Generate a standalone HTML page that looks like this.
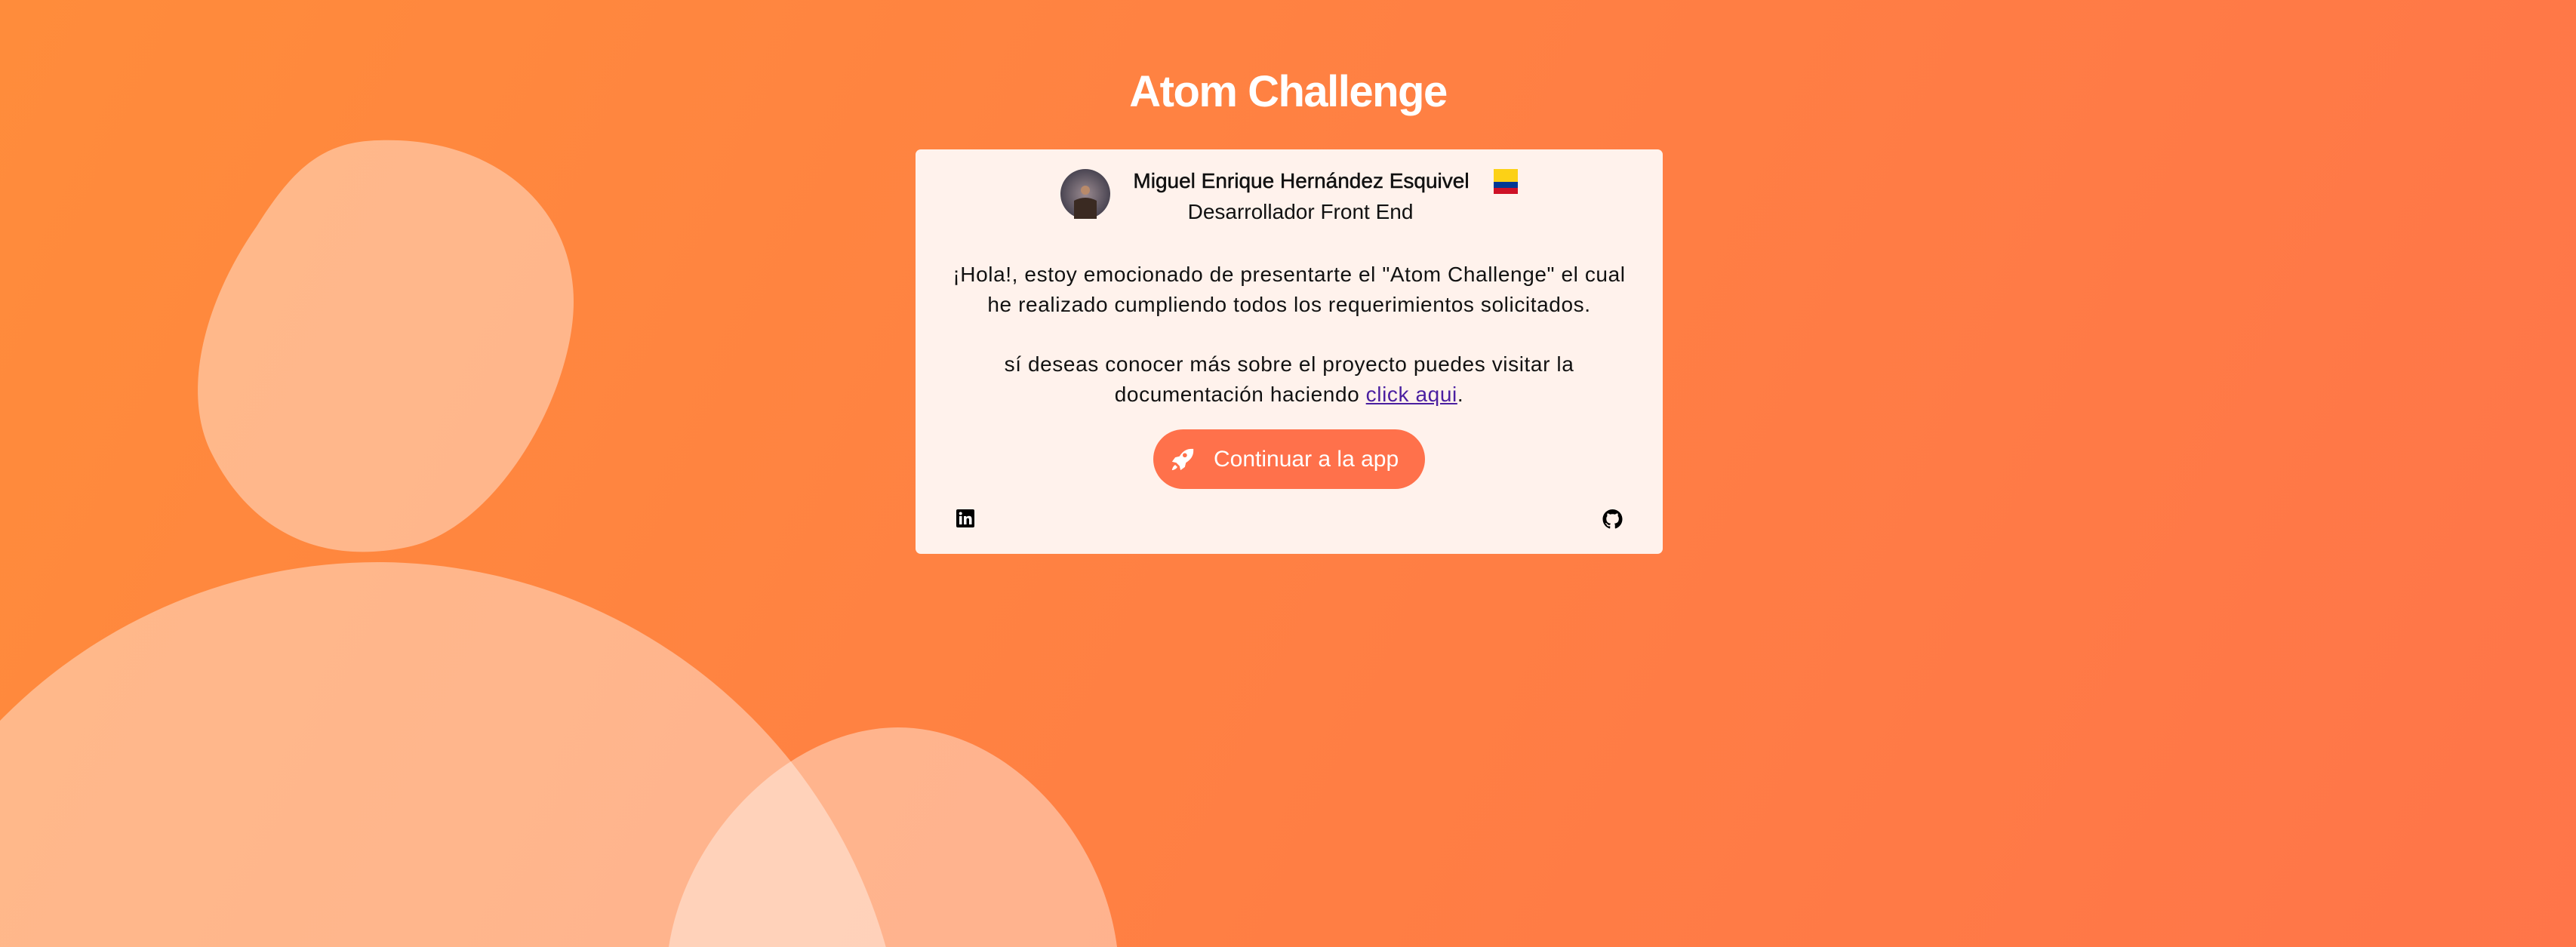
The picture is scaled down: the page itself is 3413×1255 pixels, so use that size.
<!DOCTYPE html>
<html><head><meta charset="utf-8"><style>
html,body{margin:0;padding:0;width:3413px;height:1255px;overflow:hidden}
body{background:linear-gradient(115deg,#ff8c3b 0%,#ff8242 40%,#ff7549 100%);font-family:"Liberation Sans",sans-serif;position:relative}
svg{display:block}
svg.bg{position:absolute;left:0;top:0}
h1{position:absolute;left:0;width:3413px;top:88px;margin:0;text-align:center;color:#fff;font-size:58px;font-weight:bold;letter-spacing:-1.5px}
.card{position:absolute;left:1213px;top:198px;width:990px;height:536px;background:#fff2ec;border-radius:7px;overflow:hidden}
.t{position:absolute;left:0;width:990px;text-align:center;color:#111;white-space:nowrap}
</style></head><body>
<svg class="bg" width="3413" height="1255">
<path d="M500,186 C650,180 760,270 760,400 C760,520 660,700 540,725 C420,750 330,700 280,600 C240,520 270,400 340,300 C390,220 430,188 500,186Z" fill="#fff" fill-opacity="0.4"/>
<circle cx="500" cy="1445" r="700" fill="#fff" fill-opacity="0.4"/>
<path d="M886,1255 C910,1100 1050,964 1190,964 C1330,964 1460,1100 1480,1255Z" fill="#fff" fill-opacity="0.4"/>
</svg>
<h1>Atom Challenge</h1>
<div class="card">
<svg style="position:absolute;left:192px;top:26px" width="66" height="66"><defs><radialGradient id="g"><stop offset="0" stop-color="#9a8a90"/><stop offset="1" stop-color="#4a4552"/></radialGradient></defs><circle cx="33" cy="33" r="33" fill="url(#g)"/><path d="M18 66 V42 Q33 34 48 42 V66Z" fill="#3a2a22"/><circle cx="33" cy="28" r="6" fill="#b88a6a"/></svg>
<div class="t" style="top:26px;font-size:28px;left:284px;width:454px;-webkit-text-stroke:0.5px #111">Miguel Enrique Hernández Esquivel</div>
<svg style="position:absolute;left:766px;top:26px" width="32" height="33"><rect width="32" height="17" fill="#fcd116"/><rect y="17" width="32" height="8" fill="#003893"/><rect y="25" width="32" height="8" fill="#ce1126"/></svg>
<div class="t" style="top:67px;font-size:28px;left:260px;width:500px">Desarrollador Front End</div>
<div class="t" style="top:146px;font-size:28px;line-height:40px;letter-spacing:0.6px">¡Hola!, estoy emocionado de presentarte el "Atom Challenge" el cual<br>he realizado cumpliendo todos los requerimientos solicitados.</div>
<div class="t" style="top:265px;font-size:28px;line-height:40px;letter-spacing:0.6px">sí deseas conocer más sobre el proyecto puedes visitar la<br>documentación haciendo <span style="color:#4a1fa0;text-decoration:underline">click aqui</span>.</div>
<div style="position:absolute;left:315px;top:371px;width:360px;height:79px;border-radius:40px;background:#ff714b;color:#fff;font-size:30px;line-height:79px">
<svg style="position:absolute;left:22px;top:22px" width="34" height="36" viewBox="0 0 24 24"><path fill="#fff" d="M20 2c-4 0-8 2-11 7l-4 1-3 4 4 1 3 3 1 4 4-3 1-4c5-3 7-7 7-11V2zm-4 6a2 2 0 1 1 0-.01zM5 17c-2 1-3 4-3 5 1 0 4-1 5-3z"/></svg>
<span style="position:absolute;left:80px">Continuar a la app</span></div>
<svg style="position:absolute;left:54px;top:477px" width="24" height="24" viewBox="0 0 24 24"><rect width="24" height="24" rx="2" fill="#000"/><rect x="4" y="9" width="3.5" height="11" fill="#fff"/><circle cx="5.7" cy="5.5" r="2" fill="#fff"/><path d="M10 9h3.3v1.6c.6-1.1 1.9-1.9 3.6-1.9 3 0 3.6 2 3.6 4.6V20h-3.5v-5.8c0-1.4-.2-2.6-1.7-2.6s-1.8 1.1-1.8 2.6V20H10z" fill="#fff"/></svg>
<svg style="position:absolute;left:910px;top:477px" width="27" height="26" viewBox="0 0 16 16"><path fill="#000" d="M8 0C3.58 0 0 3.58 0 8c0 3.54 2.29 6.53 5.47 7.59.4.07.55-.17.55-.38 0-.19-.01-.82-.01-1.49-2.01.37-2.53-.49-2.69-.94-.09-.23-.48-.94-.82-1.13-.28-.15-.68-.52-.01-.53.63-.01 1.08.58 1.23.82.72 1.21 1.87.87 2.33.66.07-.52.28-.87.51-1.07-1.78-.2-3.64-.89-3.64-3.95 0-.87.31-1.59.82-2.15-.08-.2-.36-1.02.08-2.12 0 0 .67-.21 2.2.82.64-.18 1.32-.27 2-.27.68 0 1.36.09 2 .27 1.53-1.04 2.2-.82 2.2-.82.44 1.1.16 1.92.08 2.12.51.56.82 1.27.82 2.15 0 3.07-1.87 3.75-3.65 3.95.29.25.54.73.54 1.48 0 1.07-.01 1.93-.01 2.2 0 .21.15.46.55.38A8.013 8.013 0 0016 8c0-4.42-3.58-8-8-8z"/></svg>
</div>
</body></html>
